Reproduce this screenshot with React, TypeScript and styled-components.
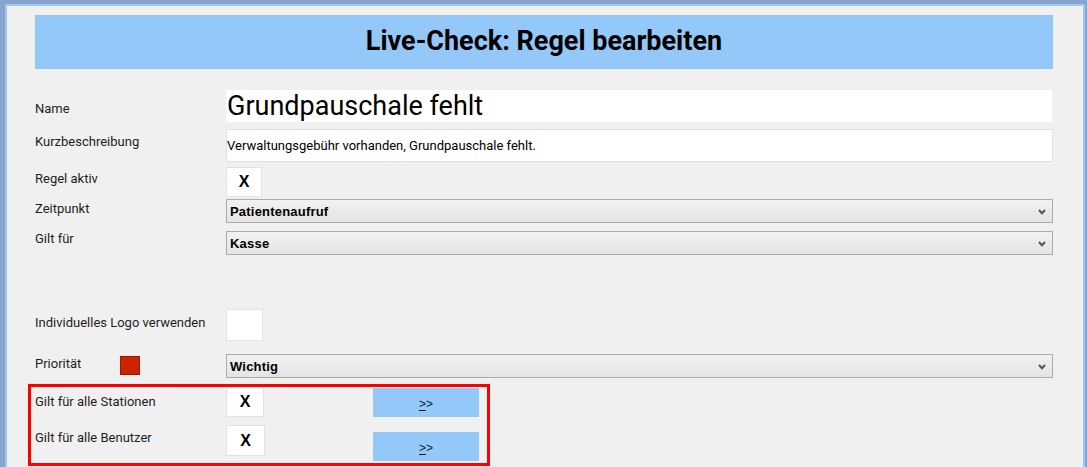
import React from 'react'
import styled, { createGlobalStyle } from 'styled-components'

const GlobalStyle = createGlobalStyle`
  html, body {
    margin: 0;
    padding: 0;
    background: #f0f0f0;
  }
  * {
    box-sizing: border-box;
  }
`

const Window = styled.div`
  width: 100%;
  height: 467px;
  overflow: hidden;
  border-top: 4px solid #88a4cc;
  border-left: 5px solid #88a4cc;
  border-right: 2px solid #88a4cc;
  background: #9cc8f4;
`

const Client = styled.div`
  height: 100%;
  border-top: 2px solid #9cc8f4;
  border-left: 2px solid #9cc8f4;
  border-right: 2px solid #9cc8f4;
  background: #f0f0f0;
  padding: 9px 30px 0 28px;
  font-family: Roboto, 'Liberation Sans', sans-serif;
  color: #1e1e1e;
`

const Banner = styled.div`
  height: 54px;
  background: #94c8f8;
  padding-top: 10px;
  text-align: center;
  font-family: Roboto, 'Liberation Sans', sans-serif;
  font-weight: 700;
  font-size: 27px;
  line-height: 32px;
  color: #000;
`

const Form = styled.div`
  display: flex;
  flex-direction: column;
`

const Row = styled.div<{ $gap: number }>`
  display: grid;
  grid-template-columns: 191px 1fr;
  align-items: start;
  margin-top: ${(p) => p.$gap}px;
`

const Label = styled.div<{ $offset: number }>`
  padding-top: ${(p) => p.$offset}px;
  font-size: 13px;
  line-height: 15px;
  color: #1e1e1e;
  white-space: nowrap;
`

const PriorityLabel = styled.div`
  display: grid;
  grid-template-columns: 85px 20px;
  align-items: start;
  padding-top: 2px;
`

const PrioritySwatch = styled.div`
  width: 20px;
  height: 19px;
  background: #cc2200;
  border: 1px solid #9a1a00;
`

const NameField = styled.div`
  height: 32px;
  width: calc(100% - 1px);
  background: #fff;
  display: flex;
  align-items: center;
  padding-left: 1px;
  font-size: 27px;
  color: #000;
`

const TextField = styled.div`
  height: 33px;
  background: #fff;
  border: 1px solid #d9e1ec;
  display: flex;
  align-items: center;
  font-size: 13px;
  color: #000;
`

const CheckBox = styled.div<{ $w: number; $h: number }>`
  width: ${(p) => p.$w}px;
  height: ${(p) => p.$h}px;
  background: #fff;
  border: 1px solid #dde4ee;
  display: flex;
  align-items: center;
  justify-content: center;
  font-family: 'Liberation Sans', Arial, sans-serif;
  font-weight: 700;
  font-size: 16px;
  color: #000;
`

const Select = styled.div`
  height: 24px;
  border: 1px solid #acacac;
  background: linear-gradient(#f2f2f2, #e4e4e4);
  display: flex;
  align-items: center;
  justify-content: space-between;
  padding: 0 6px 0 3px;
  font-family: 'Liberation Sans', Arial, sans-serif;
  font-weight: 700;
  font-size: 13px;
  letter-spacing: 0.2px;
  color: #000;
`

const Chevron = styled.svg`
  width: 8px;
  height: 6px;
  margin-top: 1px;
`

const Highlight = styled.div`
  margin: 6px 0 0 -7px;
  width: 462px;
  height: 82px;
  border: 3px solid #ff0000;
  padding: 0 8px 0 4px;
`

const HighlightRow = styled.div<{ $gap: number }>`
  display: grid;
  grid-template-columns: 191px 147px 106px;
  align-items: start;
  margin-top: ${(p) => p.$gap}px;
`

const ListButton = styled.button<{ $offset: number; $h: number }>`
  margin-top: ${(p) => p.$offset}px;
  height: ${(p) => p.$h}px;
  width: 106px;
  border: none;
  padding: 2px 0 0;
  background: #94c8f8;
  font-family: 'Liberation Sans', Arial, sans-serif;
  font-size: 12px;
  color: #0c1a3a;
  cursor: pointer;

  u {
    text-decoration-thickness: 1px;
    text-underline-offset: 2px;
  }
`

const DropArrow = () => (
  <Chevron viewBox="0 0 8 6">
    <path d="M1 1 L4 4.2 L7 1" fill="none" stroke="#555" strokeWidth="2" />
  </Chevron>
)

const App = (): JSX.Element => {
  return (
    <>
      <GlobalStyle />
      <Window>
        <Client>
          <Banner>Live-Check: Regel bearbeiten</Banner>
          <Form>
            <Row $gap={21}>
              <Label $offset={11}>Name</Label>
              <NameField>Grundpauschale fehlt</NameField>
            </Row>
            <Row $gap={7}>
              <Label $offset={5}>Kurzbeschreibung</Label>
              <TextField>Verwaltungsgebühr vorhanden, Grundpauschale fehlt.</TextField>
            </Row>
            <Row $gap={5}>
              <Label $offset={4}>Regel aktiv</Label>
              <CheckBox $w={36} $h={30}>X</CheckBox>
            </Row>
            <Row $gap={2}>
              <Label $offset={2}>Zeitpunkt</Label>
              <Select>
                Patientenaufruf
                <DropArrow />
              </Select>
            </Row>
            <Row $gap={8}>
              <Label $offset={0}>Gilt für</Label>
              <Select>
                Kasse
                <DropArrow />
              </Select>
            </Row>
            <Row $gap={54}>
              <Label $offset={6}>Individuelles Logo verwenden</Label>
              <CheckBox $w={37} $h={32} />
            </Row>
            <Row $gap={13}>
              <PriorityLabel>
                <Label $offset={0}>Priorität</Label>
                <PrioritySwatch />
              </PriorityLabel>
              <Select>
                Wichtig
                <DropArrow />
              </Select>
            </Row>
          </Form>
          <Highlight>
            <HighlightRow $gap={0}>
              <Label $offset={7}>Gilt für alle Stationen</Label>
              <CheckBox $w={38} $h={30}>X</CheckBox>
              <ListButton $offset={1} $h={29}>
                <u>&gt;</u>&gt;
              </ListButton>
            </HighlightRow>
            <HighlightRow $gap={8}>
              <Label $offset={5}>Gilt für alle Benutzer</Label>
              <CheckBox $w={39} $h={31}>X</CheckBox>
              <ListButton $offset={7} $h={29}>
                <u>&gt;</u>&gt;
              </ListButton>
            </HighlightRow>
          </Highlight>
        </Client>
      </Window>
    </>
  )
}

export default App
